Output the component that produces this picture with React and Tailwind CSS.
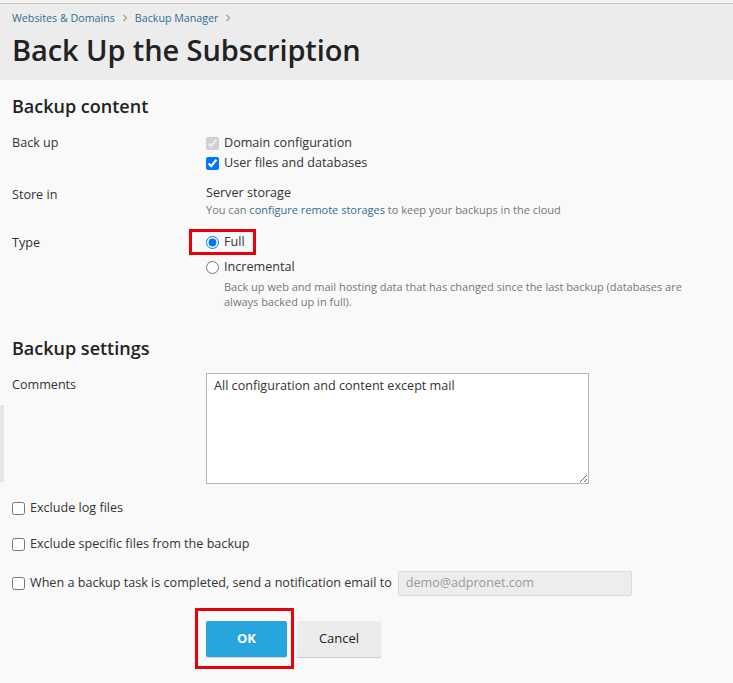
import React from "react";

function Chevron() {
  return (
    <svg width="8" height="8" viewBox="0 0 8 8" className="mx-[6px] block">
      <path d="M2.5 1 L5.5 4 L2.5 7" fill="none" stroke="#9a9a9a" strokeWidth="1.1" />
    </svg>
  );
}

export default function App() {
  return (
    <div
      className="relative min-h-[683px] w-full bg-[#f9f9f9] text-[12.6px] text-[#222]"
      style={{ fontFamily: '"Open Sans", "Noto Sans", sans-serif' }}
    >
      <div className="h-[3px] bg-[#f4f4f4]" />
      <div className="h-[1px] bg-[#c4c4c4]" />
      {/* Header */}
      <div className="h-[76px] bg-[#ececec] px-[12px]">
        <div className="flex h-[27px] items-center pt-[1px] text-[10.7px] text-[#2f6f94]">
          <span>Websites &amp; Domains</span>
          <Chevron />
          <span>Backup Manager</span>
          <Chevron />
        </div>
        <h1 className="mt-[0px] text-[29px] font-semibold leading-[38px] tracking-[-0.1px] text-[#222]">
          Back Up the Subscription
        </h1>
      </div>

      <div className="px-[12px]">
        <h2 className="mt-[14px] h-[24px] text-[18px] font-semibold leading-[24px] text-[#222]">
          Backup content
        </h2>

        {/* Back up */}
        <div className="mt-[15px] flex">
          <div className="w-[194px] leading-[20px] text-[#333]">Back up</div>
          <div className="flex flex-col">
            <label className="flex h-[20px] items-center gap-[5px] text-[#333]">
              <input type="checkbox" checked disabled readOnly className="m-0 h-[13px] w-[13px]" />
              Domain configuration
            </label>
            <label className="flex h-[20px] items-center gap-[5px] text-[#333]">
              <input type="checkbox" checked readOnly className="m-0 h-[13px] w-[13px]" />
              User files and databases
            </label>
          </div>
        </div>

        {/* Store in */}
        <div className="mt-[11px] flex">
          <div className="w-[194px] pt-[1px] leading-[20px] text-[#333]">Store in</div>
          <div className="flex flex-col">
            <div className="leading-[18px] text-[#333]">Server storage</div>
            <div className="text-[11px] leading-[16px] text-[#777]">
              You can <span className="text-[#2f6f94]">configure remote storages</span> to keep your backups in the cloud
            </div>
          </div>
        </div>

        {/* Type */}
        <div className="mt-[14px] flex">
          <div className="w-[194px] pt-[1px] leading-[20px] text-[#333]">Type</div>
          <div className="flex flex-col">
            <label className="relative flex h-[20px] items-center gap-[5px] text-[#333]">
              <input type="radio" name="type" checked readOnly className="m-0 h-[13px] w-[13px]" />
              Full
              <span className="pointer-events-none absolute left-[-17px] top-[-3px] h-[26px] w-[67px] border-[3px] border-[#e8000b]" />
            </label>
            <label className="mt-[5px] flex h-[20px] items-center gap-[5px] text-[#333]">
              <input type="radio" name="type" readOnly className="m-0 h-[13px] w-[13px]" />
              Incremental
            </label>
            <div className="mt-[2px] pl-[18px] text-[11px] leading-[15px] text-[#777]">
              Back up web and mail hosting data that has changed since the last backup (databases are
              <br />
              always backed up in full).
            </div>
          </div>
        </div>

        <h2 className="mt-[27px] h-[24px] text-[18px] font-semibold leading-[24px] text-[#222]">
          Backup settings
        </h2>

        {/* Comments */}
        <div className="mt-[13px] flex">
          <div className="w-[194px] pt-[2px] leading-[20px] text-[#333]">Comments</div>
          <textarea
            className="m-0 h-[111px] w-[383px] resize border border-[#b5b5b5] bg-white px-[7px] py-[3px] text-[12.6px] leading-[18px] text-[#333] outline-none"
            defaultValue="All configuration and content except mail"
          />
        </div>

        <label className="mt-[14px] flex h-[20px] items-center gap-[5px] text-[#333]">
          <input type="checkbox" readOnly className="m-0 h-[13px] w-[13px]" />
          Exclude log files
        </label>
        <label className="mt-[16px] flex h-[20px] items-center gap-[5px] text-[#333]">
          <input type="checkbox" readOnly className="m-0 h-[13px] w-[13px]" />
          Exclude specific files from the backup
        </label>

        <div className="mt-[17px] flex items-center">
          <label className="flex items-center gap-[5px] text-[#333]">
            <input type="checkbox" readOnly className="m-0 h-[13px] w-[13px]" />
            When a backup task is completed, send a notification email to
          </label>
          <div className="ml-[6px] flex h-[25px] w-[234px] items-center rounded-[2px] border border-[#dcdcdc] bg-[#ededed] px-[7px] text-[12.6px] text-[#9a9a9a]">
            demo@adpronet.com
          </div>
        </div>

        {/* Buttons */}
        <div className="mt-[25px] flex pl-[194px]">
          <div className="relative">
            <button className="flex h-[36px] w-[81px] items-center justify-center rounded-[2px] bg-[#28a4dc] text-[13px] font-bold text-white shadow-[0_1px_1px_rgba(0,0,0,0.15)]">
              OK
            </button>
            <span className="pointer-events-none absolute left-[-11px] top-[-13px] h-[61px] w-[99px] border-[3px] border-[#e8000b]" />
          </div>
          <button className="ml-[10px] flex h-[36px] w-[84px] items-center justify-center rounded-[2px] bg-[#ececec] text-[13px] text-[#222] shadow-[0_1px_1px_rgba(0,0,0,0.2)]">
            Cancel
          </button>
        </div>
      </div>

      {/* left edge strip */}
      <div className="absolute left-0 top-[405px] h-[77px] w-[4px] bg-[#e6e6e6]" />
    </div>
  );
}
